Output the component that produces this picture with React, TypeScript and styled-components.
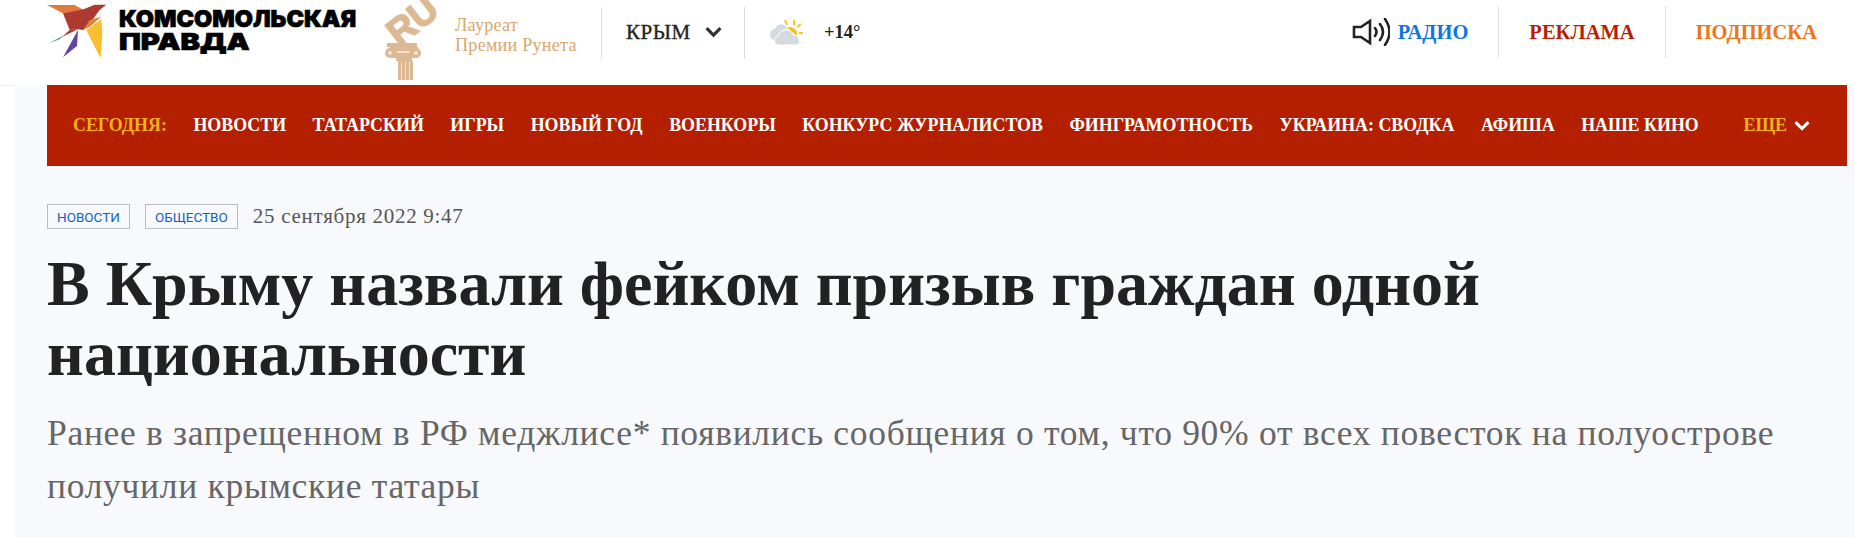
import React from "react";
import styled, { createGlobalStyle } from "styled-components";

const Global = createGlobalStyle`
  html, body { margin: 0; padding: 0; background: #fff; }
  body { width: 1855px; height: 537px; overflow: hidden; font-family: "Liberation Serif", serif; }
`;
const Page = styled.div`width: 1855px; height: 537px; display: flex; flex-direction: column;`;
const Header = styled.header`
  height: 85px; flex: none; display: flex; align-items: flex-start; padding-left: 47px; box-sizing: border-box;
`;
const LogoBlock = styled.div`display: flex; align-items: flex-start; width: 333px; padding-top: 4px;`;
const LogoWords = styled.div`margin-left: 12px; margin-top: 3px;`;
const LogoLine = styled.div<{ $scale?: number }>`
  height: 23px; font-family: Inter, "Liberation Sans", sans-serif; font-weight: 900; color: #000;
  font-size: 23.5px; line-height: 23px; -webkit-text-stroke: .7px #000; white-space: nowrap;
  transform-origin: left center; transform: scaleX(${p => p.$scale ?? 1});
`;
const Award = styled.div`display: flex; width: 221px; height: 80px; align-items: flex-start;`;
const AwardText = styled.div`margin: 15px 0 0 5px; color: #d9a770; font-size: 18.2px; line-height: 20px; letter-spacing: .2px; white-space: nowrap;`;
const Region = styled.div`
  width: 144px; height: 52px; margin-top: 7px; padding-bottom: 2px; border-left: 1px solid #d8dde1; border-right: 1px solid #d8dde1;
  display: flex; align-items: center; box-sizing: border-box; padding-left: 24px; gap: 14px;
  font-size: 21px; letter-spacing: .5px; -webkit-text-stroke: .35px #222; color: #222;
`;
const Weather = styled.div`
  display: flex; align-items: center; height: 52px; margin-top: 6px; padding-left: 25px; gap: 21px;
  font-size: 18.5px; font-weight: 700; color: #222;
`;
const TopLinks = styled.nav`margin-left: auto; display: flex; align-items: flex-start; margin-top: 6px; padding-right: 38px;`;
const TopLink = styled.div<{ $c: string; $divider?: boolean }>`
  height: 52px; display: flex; align-items: center; gap: 8px; padding: 0 30px 0 30px;
  color: ${p => p.$c}; font-weight: 700; font-size: 20.5px; white-space: nowrap;
  ${p => p.$divider ? "border-left: 1px solid #dfe2e6;" : ""}
  &:last-child { padding-right: 0; }
`;
const Main = styled.div`flex: 1; display: flex;`;
const Gutter = styled.div`width: 15px; flex: none; box-sizing: border-box; border-top: 1px solid #efefef;`;
const Body = styled.main`flex: 1; background: #f8f9fd; padding: 0 8px 0 32px;`;
const Nav = styled.nav`
  height: 81px; background: #b41f00; display: flex; align-items: center; padding: 0 0 0 26px;
  font-size: 17.9px; font-weight: 700; color: #fff; white-space: nowrap;
`;
const NavItem = styled.span<{ $c?: string }>`margin-right: 26.5px; color: ${p => p.$c || "#fff"}; &:nth-last-child(2) { margin-right: 0; }`;
const More = styled.span`margin-left: auto; margin-right: 37px; color: #f0b21c; display: flex; align-items: center; gap: 7px;`;
const Meta = styled.div`display: flex; align-items: center; height: 25px; margin-top: 38px; gap: 15px;`;
const Tag = styled.span`
  height: 25px; box-sizing: border-box; border: 1px solid #b9bdc2; padding: 0 9px; display: flex; align-items: center;
  font-family: Roboto, sans-serif; font-size: 13.5px; color: #0f62c0;
`;
const DateText = styled.span`font-size: 21px; letter-spacing: .72px; color: #555;`;
const Title = styled.h1`
  margin: 20px 0 0; width: 1760px; font-size: 64px; line-height: 70px; font-weight: 700; color: #222;
`;
const Lead = styled.p`
  margin: 18px 0 0; width: 1760px; font-size: 35.5px; letter-spacing: .7px; line-height: 53px; color: #666; font-weight: 400;
`;

const Bird = () => (
  <svg width="60" height="54" viewBox="22 12 180 162" style={{ flex: "none" }}>
    <polygon points="22,15 105,15 132,30 70,40" fill="#e5793a" />
    <polygon points="70,40 132,28 150,20 165,14 200,14 180,30 165,50 145,80 130,90 115,88 90,90" fill="#ac3a30" />
    <polygon points="28,130 115,88 90,90 70,108" fill="#b5382c" />
    <polygon points="28,130 70,108 60,118" fill="#5f8ccb" />
    <polygon points="115,90 70,172 112,138" fill="#6243a5" />
    <polygon points="140,90 185,58 188,100 183,175 165,140" fill="#fbbe30" />
    <polygon points="130,90 150,60 185,50 150,80" fill="#e67f2e" />
  </svg>
);
const Column = () => (
  <svg width="70" height="80" viewBox="0 0 70 80" style={{ flex: "none" }}>
    <text x="19" y="47" fontFamily="Liberation Sans, sans-serif" fontWeight="700" fontSize="37" fill="#dcb992" stroke="#dcb992" strokeWidth="1.5" transform="rotate(-38 19 47)">RU</text>
    <g fill="#dcb992">
      <rect x="7" y="43" width="30" height="4" />
      <circle cx="10" cy="53" r="5" />
      <circle cx="36" cy="53" r="5" />
      <rect x="10" y="47" width="28" height="11" />
      <rect x="16" y="58" width="16" height="3" />
      <rect x="18" y="61" width="15" height="19" />
    </g>
    <g fill="#f3e4d2">
      <rect x="21" y="62" width="1" height="18" />
      <rect x="25" y="62" width="1" height="18" />
      <rect x="29" y="62" width="1" height="18" />
      <circle cx="10" cy="53" r="2" />
      <circle cx="36" cy="53" r="2" />
      <rect x="17" y="51" width="13" height="2" />
    </g>
  </svg>
);
const Chevron = ({ c, w }: { c: string; w: number }) => (
  <svg width={w} height={w * 0.7} viewBox="0 0 16 11"><polyline points="1.5,2 8,8.5 14.5,2" fill="none" stroke={c} strokeWidth="3" /></svg>
);
const Cloud = () => (
  <svg width="33" height="26" viewBox="0 0 33 26">
    <g stroke="#f7c51e" strokeWidth="2"><line x1="15" y1="1" x2="17" y2="6"/><line x1="24" y1="1" x2="24" y2="6"/><line x1="31" y1="5" x2="27" y2="8"/><line x1="33" y1="14" x2="29" y2="14"/></g>
    <path d="M17 9 a7 7 0 0 1 10 8z" fill="#f7c51e" />
    <path d="M3 21 C-2 17 0 10 5 10 C7 4 14 4 17 9 L17 21Z" fill="#d5dae0" />
    <path d="M9 26 C3 26 3 18 8 17 C10 9 21 9 23 16 C30 15 32 26 26 26Z" fill="#d5dae0" stroke="#fff" strokeWidth="1" />
  </svg>
);
const Speaker = () => (
  <svg width="38" height="28" viewBox="0 0 38 28" fill="none" stroke="#222" strokeWidth="2.6" strokeLinecap="round">
    <path d="M2 9 h7 l9-6 v22 l-9-6 h-7z" />
    <path d="M23 10 q3 4 0 8 M28 6 q6 8 0 16 M33 1 q9 13 0 26" />
  </svg>
);

const items = ["НОВОСТИ", "ТАТАРСКИЙ", "ИГРЫ", "НОВЫЙ ГОД", "ВОЕНКОРЫ", "КОНКУРС ЖУРНАЛИСТОВ", "ФИНГРАМОТНОСТЬ", "УКРАИНА: СВОДКА", "АФИША", "НАШЕ КИНО"];

export default function App() {
  return (
    <Page>
      <Global />
      <Header>
        <LogoBlock>
          <Bird />
          <LogoWords>
            <LogoLine>КОМСОМОЛЬСКАЯ</LogoLine>
            <LogoLine $scale={1.24}>ПРАВДА</LogoLine>
          </LogoWords>
        </LogoBlock>
        <Award>
          <Column />
          <AwardText>Лауреат<br />Премии Рунета</AwardText>
        </Award>
        <Region>КРЫМ <Chevron c="#333" w={17} /></Region>
        <Weather><Cloud /> +14°</Weather>
        <TopLinks>
          <TopLink $c="#0f76e0"><Speaker /> РАДИО</TopLink>
          <TopLink $c="#b81d06" $divider>РЕКЛАМА</TopLink>
          <TopLink $c="#ee7518" $divider>ПОДПИСКА</TopLink>
        </TopLinks>
      </Header>
      <Main>
        <Gutter />
        <Body>
          <Nav>
            <NavItem $c="#f0b21c">СЕГОДНЯ:</NavItem>
            {items.map(t => <NavItem key={t}>{t}</NavItem>)}
            <More>ЕЩЕ <Chevron c="#fff" w={16} /></More>
          </Nav>
          <Meta>
            <Tag>НОВОСТИ</Tag>
            <Tag>ОБЩЕСТВО</Tag>
            <DateText>25 сентября 2022 9:47</DateText>
          </Meta>
          <Title>В Крыму назвали фейком призыв граждан одной национальности</Title>
          <Lead>Ранее в запрещенном в РФ меджлисе* появились сообщения о том, что 90% от всех повесток на полуострове получили крымские татары</Lead>
        </Body>
      </Main>
    </Page>
  );
}
